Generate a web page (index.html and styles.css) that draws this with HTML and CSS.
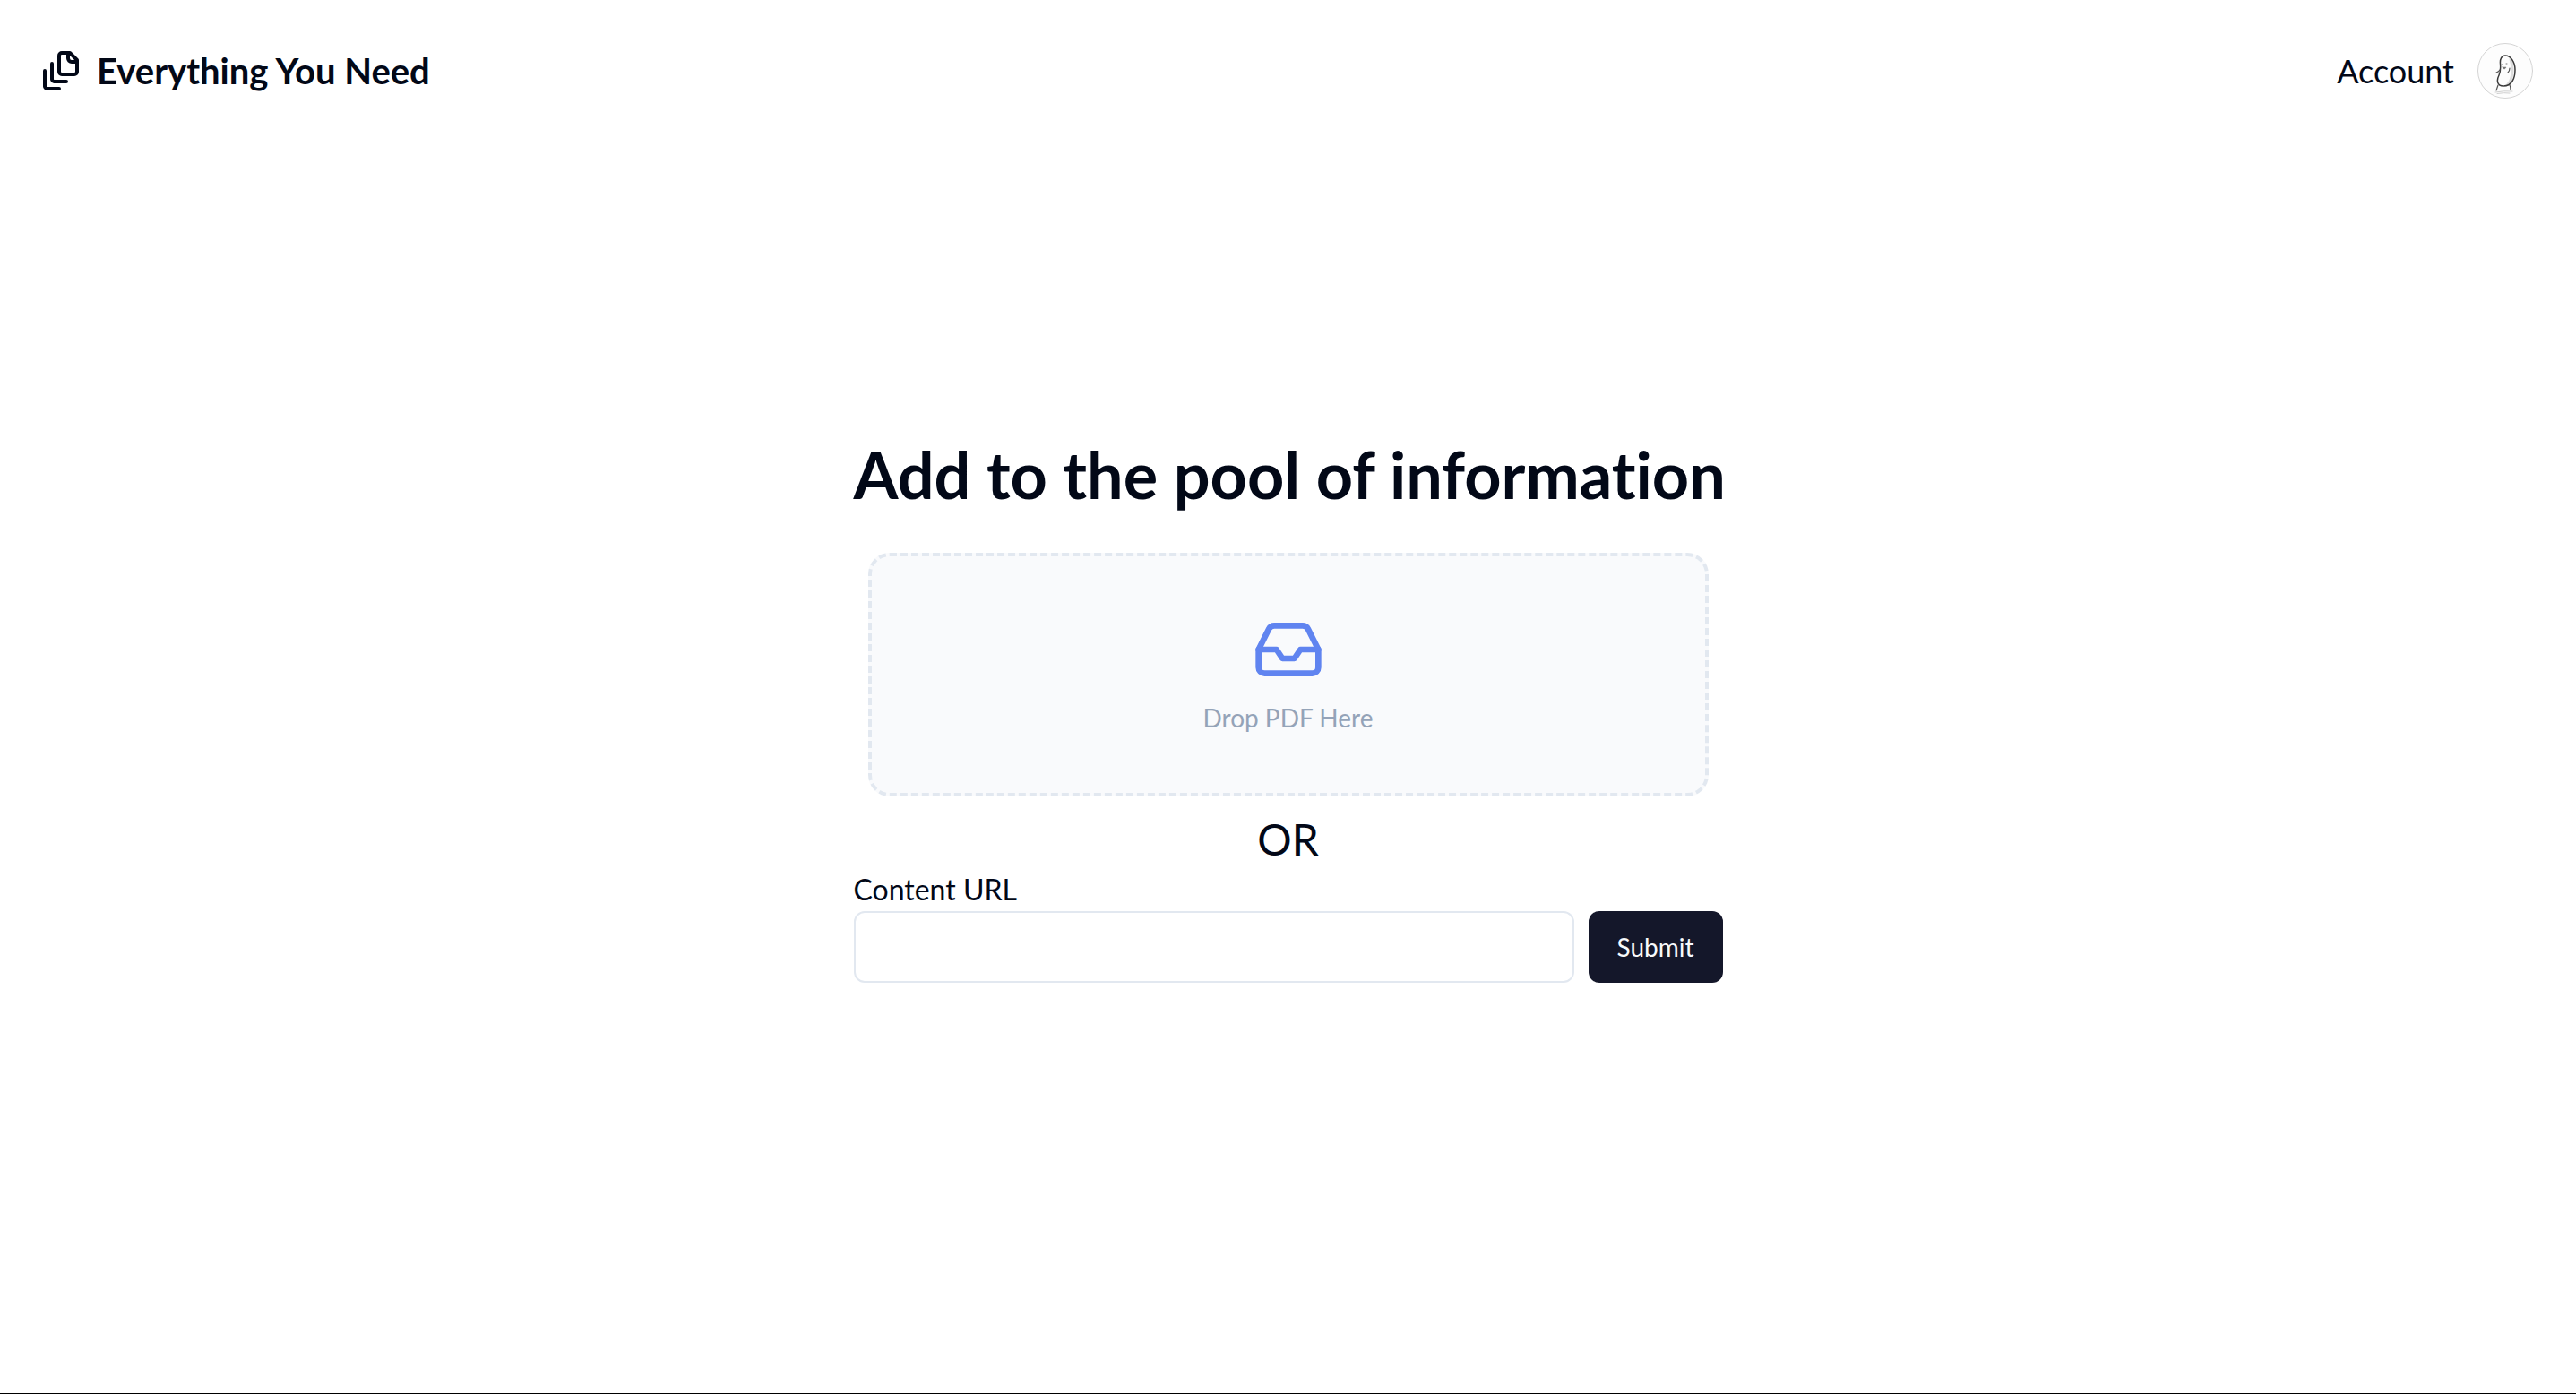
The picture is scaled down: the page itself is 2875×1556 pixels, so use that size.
FILE: index.html
```html
<!DOCTYPE html>
<html lang="en">
<head>
<meta charset="utf-8">
<meta name="viewport" content="width=device-width, initial-scale=1">
<title>Everything You Need</title>
<link rel="stylesheet" href="styles.css">
</head>
<body>
<header class="site-header">
  <a class="brand" href="#">
    <svg class="brand-icon" viewBox="0 0 24 24" aria-hidden="true">
      <path d="M21 7h-3a2 2 0 0 1-2-2V2"/>
      <path d="M21 6v6.5c0 .8-.7 1.5-1.5 1.5h-7c-.8 0-1.5-.7-1.5-1.5v-9c0-.8.7-1.5 1.5-1.5H17Z"/>
      <path d="M7 8v8.8c0 .3.2.6.4.8.2.2.5.4.8.4H15"/>
      <path d="M3 12v8.8c0 .3.2.6.4.8.2.2.5.4.8.4H11"/>
    </svg>
    <span>Everything You Need</span>
  </a>
  <a class="account" href="#">
    <span>Account</span>
    <svg class="avatar" viewBox="0 0 62 62" aria-hidden="true">
      <circle cx="31" cy="31" r="30.5" fill="#fdfdfd" stroke="#d4d4d4" stroke-width="1"/>
      <path d="M20 55Q30 53 39 54M22 56.5Q30 55 36 56" stroke="#cfcfcf" stroke-width="1"/>
      <path d="M37 18C40 26 40 40 34 46" stroke="#dddddd" stroke-width="3"/>
      <path d="M31 14C27 14 25 18 25.5 23C26 29 26 32 24 36C21 42 22 48 29 48C38 48 42 40 42 30C42 21 37 14 31 14Z" stroke="#3a3a3a" stroke-width="1.5"/>
      <path d="M25 30Q24 32 21 33M36 28Q36 31 34 33M23 47Q22 50 21 53M36 47Q37 49 37 52" stroke="#555555" stroke-width="1.2"/>
      <path d="M27 24h1M32 23h1" stroke="#777777" stroke-width="1"/>
      <path d="M28 27h4Q31 29 30 29Q29 29 28 27Z" fill="#777777" stroke="#777777" stroke-width=".5"/>
    </svg>
  </a>
</header>
<main class="page">
  <div class="panel">
    <h1 class="title">Add to the pool of information</h1>
    <button class="dropzone" type="button">
      <svg class="drop-icon" viewBox="0 0 24 24" aria-hidden="true">
        <path d="M22 12h-6l-2 3h-4l-2-3H2"/>
        <path d="M5.45 5.11 2 12v6a2 2 0 0 0 2 2h16a2 2 0 0 0 2-2v-6l-3.45-6.89A2 2 0 0 0 16.76 4H7.24a2 2 0 0 0-1.79 1.11z"/>
      </svg>
      <span>Drop PDF Here</span>
    </button>
    <p class="divider">OR</p>
    <form class="url-form">
      <label class="url-label" for="content-url">Content URL</label>
      <div class="url-row">
        <input class="url-input" id="content-url" type="text">
        <button class="submit" type="submit">Submit</button>
      </div>
    </form>
  </div>
</main>
</body>
</html>
```

FILE: styles.css
```css
* {
  box-sizing: border-box;
}

body {
  display: flex;
  flex-direction: column;
  min-height: 100vh;
  margin: 0;
  border-bottom: 1px solid #000;
  background: #fff;
  color: #020817;
  font-family: Lato, "Liberation Sans", sans-serif;
  font-variant-ligatures: none;
}

svg {
  fill: none;
  stroke: currentColor;
  stroke-width: 2;
  stroke-linecap: round;
  stroke-linejoin: round;
}

.site-header {
  display: flex;
  align-items: center;
  justify-content: space-between;
  padding: 48px 48px 48px 44px;
}

.brand,
.account {
  display: flex;
  align-items: center;
  color: inherit;
  text-decoration: none;
}

.brand {
  gap: 16px;
  font-size: 40px;
  font-weight: 700;
  line-height: 56px;
}

.brand-icon {
  width: 48px;
  height: 48px;
}

.account {
  gap: 26px;
  font-size: 36px;
  line-height: 56px;
}

.avatar {
  width: 62px;
  height: 62px;
}

.page {
  display: flex;
  flex: 1;
  align-items: center;
  justify-content: center;
  padding-bottom: 128px;
}

.panel {
  display: flex;
  flex-direction: column;
  width: 100%;
  max-width: 970px;
}

.title {
  margin: 0 0 48px;
  font-size: 72px;
  font-weight: 700;
  line-height: 80px;
  white-space: nowrap;
}

.dropzone {
  display: flex;
  flex-direction: column;
  align-items: center;
  gap: 16px;
  margin: 0 16px;
  padding: 64px;
  border: 4px dashed #e2e8f0;
  border-radius: 24px;
  background: #f9fafc;
  color: #94a3b8;
  font: inherit;
  font-size: 28px;
  line-height: 40px;
  cursor: pointer;
}

.drop-icon {
  width: 80px;
  height: 80px;
  color: #6084f0;
}

.divider {
  margin: 16px 0 0;
  font-size: 48px;
  line-height: 64px;
  text-align: center;
}

.url-form {
  display: flex;
  flex-direction: column;
}

.url-label {
  font-size: 32px;
  line-height: 48px;
}

.url-row {
  display: flex;
  gap: 16px;
}

.url-input {
  flex: 1;
  min-width: 0;
  height: 80px;
  padding: 16px 24px;
  border: 2px solid #e2e8f0;
  border-radius: 12px;
  background: #fff;
  color: inherit;
  font: inherit;
  font-size: 28px;
}

.submit {
  height: 80px;
  padding: 16px 32px;
  border: 0;
  border-radius: 12px;
  background: #14172a;
  color: #f8fafc;
  font: inherit;
  font-size: 28px;
  cursor: pointer;
}
```
